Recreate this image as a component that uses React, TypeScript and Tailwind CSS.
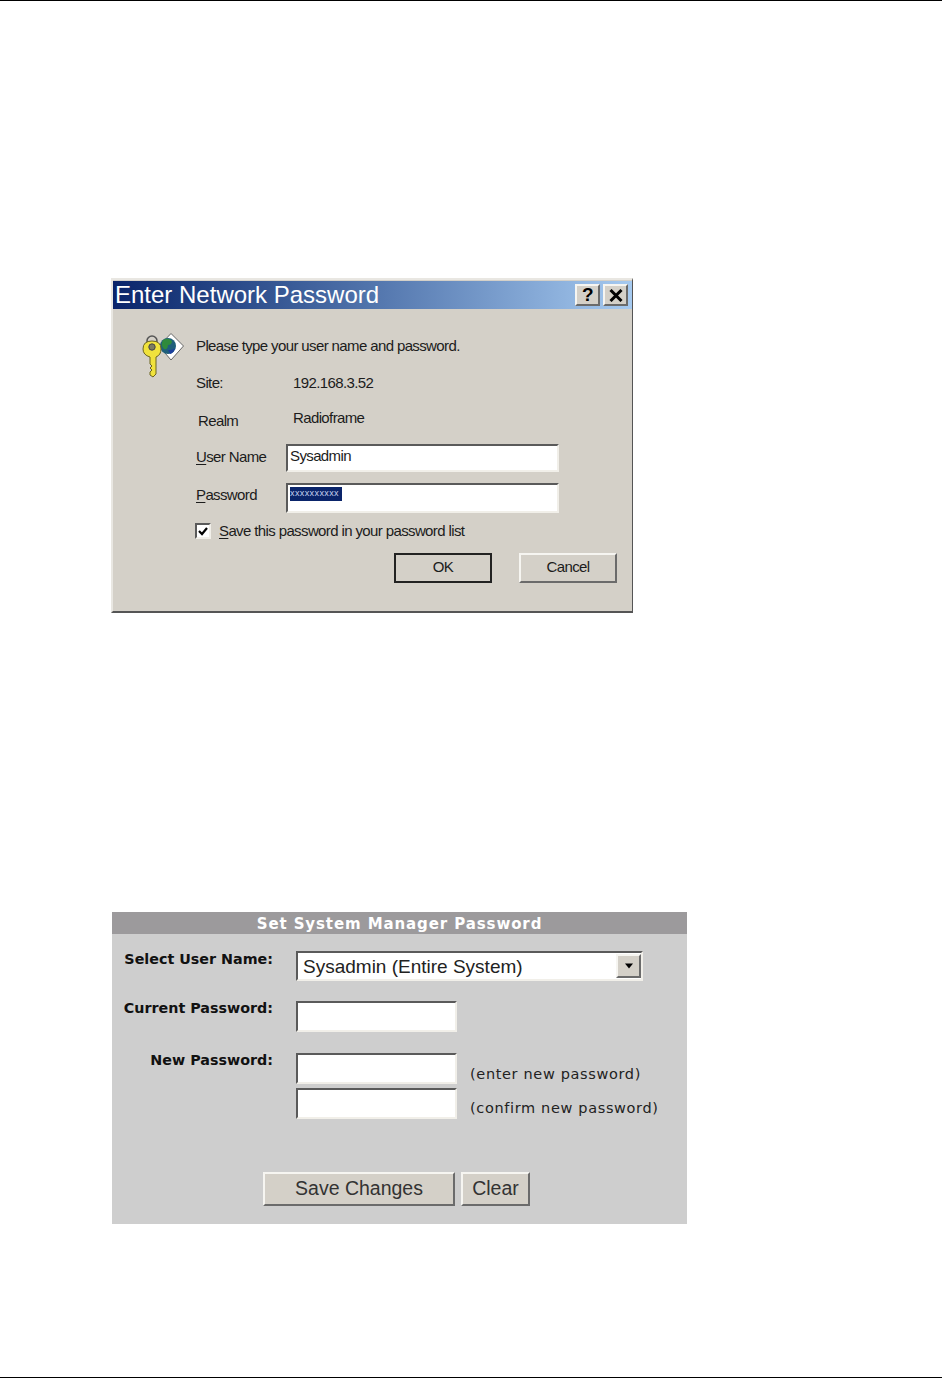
import { FC, ReactNode } from 'react';

const sunken = 'border-2 border-t-[#5a5a5a] border-l-[#5a5a5a] border-r-[#f1efe9] border-b-[#f1efe9] bg-white';
const raised = 'border-2 border-t-[#f6f5f1] border-l-[#f6f5f1] border-r-[#6b6b6b] border-b-[#6b6b6b] bg-[#d4d0c8]';

const KeyIcon: FC = () => (
  <svg width="44" height="46" viewBox="0 0 44 46" className="shrink-0">
    {/* diamond tag with the globe */}
    <path d="M18 13 L30 0.5 L42.5 13 L30 27 Z" fill="#fff" stroke="#666" strokeWidth="1" />
    <circle cx="27" cy="13" r="8" fill="#1f5f7a" />
    <path d="M22 7 q5 -3 9 1 q0 4 -4 4 q0 5 -4 4 q-4 -4 -1 -9z" fill="#2f8a3c" />
    <path d="M27 17 q5 0 7 -2 q-1 5 -5 6z" fill="#1c3f9c" />
    {/* key */}
    <circle cx="11" cy="8" r="5" fill="none" stroke="#555" strokeWidth="1.6" />
    <path d="M2 16 q0 -8 9 -8 q9 0 9 8 q0 6 -5 8 V41 L12 44 L9 42 V39 L11 37 L9 35 L11 33 L9 31 V24 q-7 -2 -7 -8z" fill="#f0e23c" stroke="#6b6420" strokeWidth="1" />
    <circle cx="11" cy="14" r="3.2" fill="#7c7c60" stroke="#444" strokeWidth="1" />
  </svg>
);

const Label: FC<{ first: string; rest: string }> = ({ first, rest }) => (
  <span>
    <span className="underline underline-offset-2">{first}</span>
    {rest}
  </span>
);

const PanelRow: FC<{ label: string; className: string; labelClass?: string; children: ReactNode }> = ({ label, className, labelClass = '', children }) => (
  <div className={`flex ${className}`}>
    <div className={`w-[161px] text-right text-[14.3px] leading-4 font-bold text-[#111] ${labelClass}`}>{label}</div>
    <div className="ml-[23px]">{children}</div>
  </div>
);

export default function App() {
  return (
    <div className="relative w-[942px] h-[1378px] bg-white border-t border-b border-black font-['Liberation_Sans',Arial,sans-serif] overflow-hidden">
      {/* Enter Network Password dialog */}
      <div className="ml-[111px] mt-[277px] w-[522px] h-[335px] bg-[#d4d0c8] border-t-2 border-l-2 border-t-[#e9e7e2] border-l-[#e9e7e2] border-r border-r-[#555] border-b-2 border-b-[#555] text-[#1c1c1c] text-[15px] tracking-[-0.62px]">
        <div className="h-[28px] mt-px flex items-center justify-between pl-[2px] pr-[4px] bg-gradient-to-r from-[#0a246a] to-[#a6caf0]">
          <span className="text-white text-[24px] leading-none tracking-[0px]">Enter Network Password</span>
          <div className="flex gap-[3px]">
            <div className={`w-[25px] h-[22px] flex items-center justify-center text-[19px] font-bold text-black ${raised}`}>?</div>
            <div className={`w-[25px] h-[22px] flex items-center justify-center ${raised}`}>
              <svg width="14" height="13" viewBox="0 0 14 13">
                <path d="M1.5 1 L12.5 12 M12.5 1 L1.5 12" stroke="#000" strokeWidth="3" />
              </svg>
            </div>
          </div>
        </div>

        <div className="flex pl-[28px] pt-[24px]">
          <KeyIcon />
          <div className="ml-[11px]">
            <div className="leading-5 mt-[3px]">Please type your user name and password.</div>
            <div className="flex leading-5 mt-[17px]">
              <span className="w-[97px]">Site:</span>
              <span>192.168.3.52</span>
            </div>
            <div className="flex leading-5 mt-[15px] relative">
              <span className="w-[97px] pl-[2px] pt-[3px]">Realm</span>
              <span>Radioframe</span>
            </div>
            <div className="flex mt-[13px] items-center">
              <span className="w-[90px] pb-[2px]">
                <Label first="U" rest="ser Name" />
              </span>
              <div className={`w-[273px] h-[28px] pl-[2px] leading-5 ${sunken}`}>Sysadmin</div>
            </div>
            <div className="flex mt-[11px] items-center">
              <span className="w-[90px] pb-[6px]">
                <Label first="P" rest="assword" />
              </span>
              <div className={`w-[273px] h-[30px] pl-[2px] pt-px ${sunken}`}>
                <div className="w-[52px] h-[14px] mt-[1px] bg-[#0a246a] text-[#c6d2ee] text-[9px] leading-[13px] tracking-[0.4px] overflow-hidden">xxxxxxxxxx</div>
              </div>
            </div>
            <div className="flex items-center mt-[7px]">
              <div className={`w-[16px] h-[16px] -ml-px flex items-center justify-center ${sunken}`}>
                <svg width="10" height="10" viewBox="0 0 10 10">
                  <path d="M1 5 L4 8 L9 2" fill="none" stroke="#000" strokeWidth="2.2" />
                </svg>
              </div>
              <span className="ml-[8px]">
                <Label first="S" rest="ave this password in your password list" />
              </span>
            </div>
          </div>
        </div>

        <div className="flex mt-[10px] pl-[281px] gap-[27px]">
          <div className="w-[98px] h-[30px] flex items-center justify-center border-2 border-[#222] bg-[#d4d0c8]">OK</div>
          <div className={`w-[98px] h-[30px] flex items-center justify-center ${raised}`}>Cancel</div>
        </div>
      </div>

      {/* Set System Manager Password panel */}
      <div className="ml-[112px] mt-[299px] w-[575px] h-[312px] bg-[#cecece] font-['DejaVu_Sans',Verdana,sans-serif]">
        <div className="h-[22px] bg-[#9c9a9c] text-center text-white font-bold text-[15px] leading-[24px] tracking-[0.9px]">Set System Manager Password</div>

        <PanelRow label="Select User Name:" className="mt-[17px]">
          <div className={`w-[347px] h-[30px] flex items-center justify-between pl-[5px] ${sunken}`}>
            <span className="font-['Liberation_Sans',Arial,sans-serif] text-[19px] text-[#222] pt-[2px]">Sysadmin (Entire System)</span>
            <div className={`w-[25px] h-[24px] flex items-center justify-center ${raised}`}>
              <svg width="10" height="6" viewBox="0 0 10 6">
                <path d="M1 0.5 H9 L5 5.5 Z" fill="#000" />
              </svg>
            </div>
          </div>
        </PanelRow>

        <PanelRow label="Current Password:" className="mt-[20px]" labelClass="-mt-px">
          <div className={`w-[161px] h-[31px] ${sunken}`} />
        </PanelRow>

        <PanelRow label="New Password:" className="mt-[21px]" labelClass="-mt-px">
          <div className="flex items-end">
            <div className={`w-[161px] h-[31px] ${sunken}`} />
            <span className="ml-[13px] text-[14.5px] leading-5 tracking-[0.65px] text-[#222]">(enter new password)</span>
          </div>
          <div className="flex items-center mt-[4px]">
            <div className={`w-[161px] h-[31px] ${sunken}`} />
            <span className="ml-[13px] mt-[8px] text-[14.5px] leading-5 tracking-[0.65px] text-[#222]">(confirm new password)</span>
          </div>
        </PanelRow>

        <div className="flex mt-[53px] pl-[151px] gap-[6px] font-['Liberation_Sans',Arial,sans-serif] text-[19.5px] text-[#333]">
          <div className={`w-[192px] h-[34px] flex items-center justify-center ${raised}`}>Save Changes</div>
          <div className={`w-[69px] h-[34px] flex items-center justify-center ${raised}`}>Clear</div>
        </div>
      </div>
    </div>
  );
}
